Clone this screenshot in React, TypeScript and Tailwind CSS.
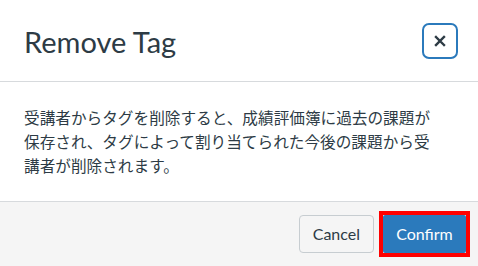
import React from "react";

export default function App() {
  return (
    <div className="w-[478px] h-[266px] bg-white flex flex-col overflow-hidden text-[#2d3b45]" style={{ fontFamily: "Lato, 'Noto Sans CJK JP', sans-serif" }}>
      <div className="h-[82px] shrink-0 border-b border-[#d7dadd] flex items-center justify-between pl-[24px] pr-[20px]">
        <h1 className="text-[29px] leading-none font-normal pt-[1px]">Remove Tag</h1>
        <button className="w-[36px] h-[36px] rounded-[7px] border-2 border-[#2b7abc] flex items-center justify-center">
          <svg width="12" height="12" viewBox="0 0 12 12">
            <path d="M2 2 L10 10 M10 2 L2 10" stroke="#2d3b45" strokeWidth="2.4" strokeLinecap="square" />
          </svg>
        </button>
      </div>
      <div className="pt-[24px] pb-[23px] px-[24px]">
        <p className="w-[414px] text-[15.65px] leading-[24px]" style={{ fontFamily: "'Noto Sans CJK JP', sans-serif" }}>
          受講者からタグを削除すると、成績評価簿に過去の課題が保存され、タグによって割り当てられた今後の課題から受講者が削除されます。
        </p>
      </div>
      <div className="flex-1 bg-[#f5f5f5] border-t border-[#d7dadd] flex items-start justify-end gap-[5px] pt-[9px] pr-[8px]">
        <button className="mt-[4px] h-[38px] px-[13px] rounded-[4px] border border-[#c7cdd1] bg-[#f5f5f5] text-[16px] text-[#2d3b45]">Cancel</button>
        <div className="border-4 border-[#ff0000]">
          <button className="block h-[38px] w-[83px] rounded-[2px] bg-[#2b7abc] text-white text-[16px]">Confirm</button>
        </div>
      </div>
    </div>
  );
}
